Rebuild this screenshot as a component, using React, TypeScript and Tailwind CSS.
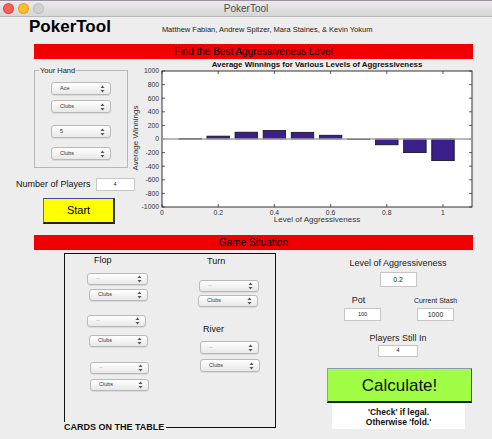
import React from 'react';

const bars = [
  { a: 0.1, v: 6 },
  { a: 0.2, v: 42 },
  { a: 0.3, v: 100 },
  { a: 0.4, v: 125 },
  { a: 0.5, v: 98 },
  { a: 0.6, v: 55 },
  { a: 0.7, v: -8 },
  { a: 0.8, v: -85 },
  { a: 0.9, v: -200 },
  { a: 1.0, v: -318 },
];

const sx = (a: number) => 32 + a * 281;
const sy = (v: number) => 80 - v * 0.068;

function Arrows() {
  return (
    <svg width="5" height="8" viewBox="0 0 5 8" className="shrink-0">
      <path d="M2.5 0.5L4.5 3H0.5Z" fill="#555" />
      <path d="M2.5 7.5L4.5 5H0.5Z" fill="#555" />
    </svg>
  );
}

function Popup({ label, className = '', dim = false }: { label: string; className?: string; dim?: boolean }) {
  return (
    <div
      className={`flex items-center justify-between rounded-[3px] border border-[#b9b9b9] bg-linear-to-b from-white to-[#e8e8e8] pl-[8px] pr-[5px] shadow-[0_1px_0_rgba(0,0,0,0.08)] ${className}`}
    >
      <span className={`text-[5.5px] leading-none ${dim ? 'text-[#9a9a9a]' : 'text-[#333]'}`}>{label}</span>
      <Arrows />
    </div>
  );
}

function Field({ value, className = '', size = 'text-[6px]' }: { value: string; className?: string; size?: string }) {
  return (
    <div className={`flex items-center justify-center border border-[#c6c6c6] bg-white leading-none text-[#222] ${size} ${className}`}>
      {value}
    </div>
  );
}

function Chart() {
  const yTicks = [1000, 800, 600, 400, 200, 0, -200, -400, -600, -800, -1000];
  const xTicks = [0, 0.2, 0.4, 0.6, 0.8, 1];
  return (
    <svg width="352" height="170" viewBox="0 0 352 170" className="shrink-0">
      <text x="187" y="8" textAnchor="middle" fontSize="7.9" fontWeight="bold" fill="#111">
        Average Winnings for Various Levels of Aggressiveness
      </text>
      <rect x="32" y="12" width="310" height="136" fill="#fff" stroke="#333" strokeWidth="1" />
      {yTicks.map((t) => (
        <g key={t}>
          <line x1="32" x2="35" y1={sy(t)} y2={sy(t)} stroke="#333" strokeWidth="0.8" />
          <line x1="339" x2="342" y1={sy(t)} y2={sy(t)} stroke="#333" strokeWidth="0.8" />
          <text x="29" y={sy(t) + 2.4} textAnchor="end" fontSize="6.8" fill="#333">
            {t}
          </text>
        </g>
      ))}
      {xTicks.map((t) => (
        <g key={t}>
          <line x1={sx(t)} x2={sx(t)} y1="148" y2="145" stroke="#333" strokeWidth="0.8" />
          <line x1={sx(t)} x2={sx(t)} y1="12" y2="15" stroke="#333" strokeWidth="0.8" />
          <text x={sx(t)} y="156" textAnchor="middle" fontSize="6.8" fill="#333">
            {t}
          </text>
        </g>
      ))}
      {bars.map((b) => {
        const y0 = sy(0);
        const y1 = sy(b.v);
        return (
          <rect
            key={b.a}
            x={sx(b.a) - 11.25}
            y={Math.min(y0, y1)}
            width="22.5"
            height={Math.max(Math.abs(y1 - y0), 0.6)}
            fill="#3b1f8c"
            stroke="#111"
            strokeWidth="0.8"
          />
        );
      })}
      <line x1="32" x2="342" y1="80" y2="80" stroke="#a3a3a3" strokeWidth="1.4" />
      <text x="187" y="163" textAnchor="middle" fontSize="8" fill="#333">
        Level of Aggressiveness
      </text>
      <text x="8" y="79" textAnchor="middle" fontSize="8" fill="#333" transform="rotate(-90 8 79)">
        Average Winnings
      </text>
    </svg>
  );
}

export default function App() {
  return (
    <div className="h-[439px] w-[492px] overflow-hidden bg-[#ededed] font-['Liberation_Sans',Arial,sans-serif] text-black">
      {/* window title bar */}
      <div className="relative flex h-[17px] items-center border-t border-b border-t-[#9d8fa0] border-b-[#b9b9b9] bg-linear-to-b from-[#ebebeb] to-[#d5d5d5]">
        <div className="flex gap-[6px] pl-[4px]">
          <span className="h-[9px] w-[9px] rounded-full bg-[#fc5f57] ring-1 ring-[#e0443e]" />
          <span className="h-[9px] w-[9px] rounded-full bg-[#fdbc2e] ring-1 ring-[#dea123]" />
          <span className="h-[9px] w-[9px] rounded-full bg-[#d0d0d0] ring-1 ring-[#bdbdbd]" />
        </div>
        <span className="absolute left-1/2 -translate-x-1/2 text-[10px] leading-none text-[#4d4d4d]">PokerTool</span>
      </div>

      {/* header */}
      <div className="flex h-[20px] items-start">
        <h1 className="ml-[29px] text-[17px] font-bold leading-[20px]">PokerTool</h1>
        <p className="ml-[51px] mt-[8px] text-[7.5px] leading-[9px] text-[#222]">
          Matthew Fabian, Andrew Spitzer, Mara Staines, &amp; Kevin Yokum
        </p>
      </div>

      <div className="ml-[34px] mt-[7px] h-[15px] w-[439px] bg-[#f00000] text-center text-[10px] leading-[15px]">
        Find the Best Aggressiveness Level
      </div>

      {/* middle: hand + chart */}
      <div className="flex h-[176px]">
        <div className="flex w-[130px] shrink-0 flex-col">
          <div className="relative ml-[34px] mt-[11px] h-[98px] w-[94px] border border-[#b7b7b7]">
            <span className="absolute -top-[5px] left-[4px] bg-[#ededed] px-[1px] text-[7.5px] leading-[9px] text-[#222]">
              Your Hand
            </span>
            <div className="ml-[16px] flex flex-col">
              <Popup label="Ace" className="mt-[11px] h-[13px] w-[60px]" />
              <Popup label="Clubs" className="mt-[5px] h-[13px] w-[60px]" />
              <Popup label="5" className="mt-[12px] h-[13px] w-[60px]" />
              <Popup label="Clubs" className="mt-[9px] h-[13px] w-[60px]" />
            </div>
          </div>
          <div className="ml-[16px] mt-[10px] flex w-[130px] items-center">
            <span className="shrink-0 whitespace-nowrap text-[9px] leading-[13px] text-[#111]">Number of Players</span>
            <Field value="4" className="ml-[5px] h-[13px] w-[39px] shrink-0" size="text-[5.5px]" />
          </div>
          <button className="ml-[43px] mt-[7px] h-[26px] w-[72px] border-t border-l border-r-2 border-b-2 border-t-[#3c4aa0] border-l-[#6a6a8a] border-r-[#333] border-b-[#222] bg-[#ffff00] text-[11px] leading-none">
            Start
          </button>
        </div>
        <Chart />
      </div>

      <div className="ml-[34px] h-[15px] w-[439px] bg-[#f00000] text-center text-[10px] leading-[15px]">
        Game Situation
      </div>

      {/* bottom: cards + situation */}
      <div className="flex">
        <div className="relative ml-[64px] mt-[3px] flex h-[175px] w-[212px] shrink-0 border border-[#111]">
          <div className="flex w-[133px] flex-col">
            <span className="ml-[29px] mt-[1px] text-[9px] leading-[11px] text-[#111]">Flop</span>
            <Popup label="--" dim className="ml-[22px] mt-[7px] h-[12px] w-[61px]" />
            <Popup label="Clubs" className="ml-[24px] mt-[4px] h-[12px] w-[59px]" />
            <Popup label="--" dim className="ml-[22px] mt-[14px] h-[12px] w-[59px]" />
            <Popup label="Clubs" className="ml-[24px] mt-[8px] h-[12px] w-[59px]" />
            <Popup label="--" dim className="ml-[25px] mt-[15px] h-[12px] w-[59px]" />
            <Popup label="Clubs" className="ml-[25px] mt-[5px] h-[12px] w-[59px]" />
          </div>
          <div className="flex flex-col">
            <span className="ml-[9px] mt-[2px] text-[9px] leading-[11px] text-[#111]">Turn</span>
            <Popup label="--" dim className="ml-[1px] mt-[13px] h-[12px] w-[60px]" />
            <Popup label="Clubs" className="mt-[3px] h-[12px] w-[60px]" />
            <span className="ml-[5px] mt-[17px] text-[9px] leading-[11px] text-[#111]">River</span>
            <Popup label="--" dim className="ml-[2px] mt-[6px] h-[13px] w-[59px]" />
            <Popup label="Clubs" className="ml-[2px] mt-[5px] h-[13px] w-[60px]" />
          </div>
          <span className="absolute -bottom-[5px] -left-px bg-[#ededed] pr-[2px] text-[9px] font-bold leading-[10px] text-[#111]">
            CARDS ON THE TABLE
          </span>
        </div>

        <div className="ml-[28px] mt-[8px] flex w-[188px] flex-col">
          <span className="text-center text-[9px] leading-[11px] text-[#222]">Level of Aggressiveness</span>
          <Field value="0.2" className="mx-auto mt-[3px] h-[15px] w-[37px]" size="text-[7px]" />
          <div className="ml-[40px] mt-[8px] flex gap-[36px]">
            <div className="flex w-[37px] flex-col items-center">
              <span className="-ml-[8px] whitespace-nowrap text-[9px] leading-[11px] text-[#222]">Pot</span>
              <Field value="100" className="mt-[2px] h-[13px] w-[37px]" size="text-[5.5px]" />
            </div>
            <div className="flex w-[37px] flex-col items-center">
              <span className="whitespace-nowrap text-[7px] leading-[11px] text-[#222]">Current Stash</span>
              <Field value="1000" className="mt-[2px] h-[13px] w-[37px]" size="text-[7px]" />
            </div>
          </div>
          <span className="mt-[12px] text-center text-[9px] leading-[11px] text-[#222]">Players Still In</span>
          <Field value="4" className="mx-auto mt-[1px] h-[12px] w-[40px]" size="text-[5.5px]" />
          <button className="ml-[23px] mt-[11px] h-[35px] w-[145px] border-t border-l border-r border-b-2 border-t-[#8a9ab0] border-l-[#8a9ab0] border-r-[#555] border-b-[#222] bg-[#a0fc44] text-[17px] leading-none text-[#111]">
            Calculate!
          </button>
          <div className="ml-[28px] mt-[1px] flex h-[25px] w-[133px] flex-col items-center justify-center bg-white text-[8.5px] font-bold leading-[10px] text-[#111]">
            <span>'Check' if legal.</span>
            <span>Otherwise 'fold.'</span>
          </div>
        </div>
      </div>
    </div>
  );
}
